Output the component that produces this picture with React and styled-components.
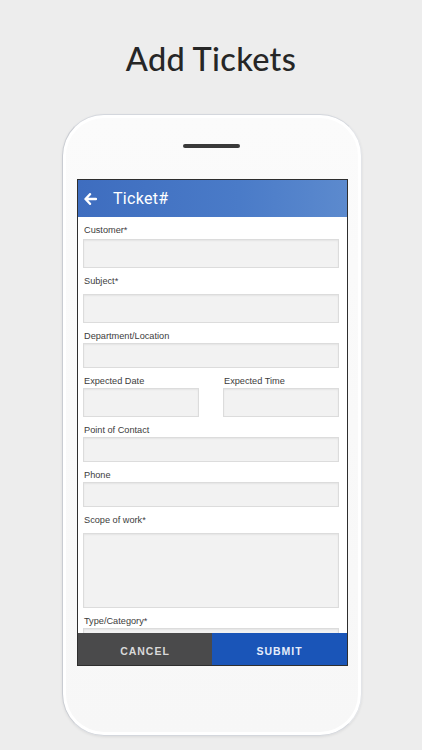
import React from 'react'
import styled, { createGlobalStyle } from 'styled-components'

const Global = createGlobalStyle`
  body {
    margin: 0;
    background: #ededed;
    font-family: "Liberation Sans", Arial, sans-serif;
  }
`

const Page = styled.div`
  width: 422px;
  height: 750px;
  display: flex;
  flex-direction: column;
  align-items: center;
  overflow: hidden;
  background: #ededed;
`

const Title = styled.h1`
  margin: 39px 0 0;
  height: 40px;
  line-height: 40px;
  font-family: Lato, "Open Sans", sans-serif;
  font-size: 32.5px;
  font-weight: 500;
  color: #262626;
  letter-spacing: 0.3px;
`

const Phone = styled.div`
  margin-top: 35px;
  margin-left: 2px;
  width: 300px;
  height: 622px;
  box-sizing: border-box;
  padding: 29px 13px 0 14px;
  display: flex;
  flex-direction: column;
  align-items: stretch;
  background: linear-gradient(180deg, #fbfbfb 0%, #f7f7f7 100%);
  border: 1.5px solid #d4d7dd;
  border-left-color: #c9ccd2;
  border-right-color: #e2e4e8;
  border-radius: 42px;
  box-shadow: 0 1px 3px rgba(0, 0, 0, 0.08), inset 0 0 0 3px #ffffff;
`

const Speaker = styled.div`
  align-self: center;
  width: 57px;
  height: 4px;
  border-radius: 3px;
  background: #3a3a3a;
  margin: 0 0 31px -2px;
`

const Screen = styled.div`
  height: 485px;
  display: flex;
  flex-direction: column;
  background: #ffffff;
  border: 1px solid #2e2e2e;
  overflow: hidden;
`

const Header = styled.div`
  height: 37px;
  flex: none;
  display: flex;
  align-items: center;
  gap: 16px;
  padding-left: 6px;
  background: linear-gradient(90deg, #3e6dbf 0%, #4a7bc8 60%, #5c8ace 100%);
  color: #ffffff;
`

const HeaderTitle = styled.span`
  font-family: Roboto, "Liberation Sans", sans-serif;
  font-size: 16px;
  font-weight: 400;
  letter-spacing: 0.3px;
`

const Form = styled.div`
  flex: 1;
  min-height: 0;
  overflow: hidden;
  padding: 0 8px 0 5px;
`

const Field = styled.div`
  display: flex;
  flex-direction: column;
  margin-top: ${({ $top }) => $top}px;
`

const Label = styled.label`
  height: 12px;
  line-height: 12px;
  font-size: 9.2px;
  color: #3c3c3c;
  padding-left: 1px;
  margin-bottom: ${({ $gap }) => $gap}px;
`

const Input = styled.div`
  height: ${({ $h }) => $h}px;
  box-sizing: border-box;
  background: #f2f2f2;
  border: 1px solid #dcdcdc;
  box-shadow: inset 0 1px 2px rgba(0, 0, 0, 0.06);
`

const Row = styled.div`
  display: grid;
  grid-template-columns: 1fr 1fr;
  gap: 24px;
`

const Footer = styled.div`
  height: 32px;
  flex: none;
  display: grid;
  grid-template-columns: 134px 1fr;
`

const FooterButton = styled.button`
  border: none;
  margin: 0;
  padding: 4px 0 0;
  font-family: "Liberation Sans", Arial, sans-serif;
  font-size: 10.5px;
  font-weight: 700;
  letter-spacing: 1px;
  background: ${({ $primary }) => ($primary ? '#1a55b8' : '#4a4a4b')};
  color: ${({ $primary }) => ($primary ? '#e6edfb' : '#d9d9d9')};
`

const BackArrow = () => (
  <svg width="13" height="12" viewBox="0 0 13 12">
    <path d="M6 1.2 1.5 6 6 10.8M1.8 6H12" fill="none" stroke="#fff" strokeWidth="2.4" strokeLinecap="round" strokeLinejoin="round" />
  </svg>
)

const fields = [
  { label: 'Customer*', top: 7, gap: 3, h: 29 },
  { label: 'Subject*', top: 7, gap: 7, h: 29 },
  { label: 'Department/Location', top: 7, gap: 1, h: 25 },
]

const rest = [
  { label: 'Point of Contact', top: 7, gap: 1, h: 25 },
  { label: 'Phone', top: 7, gap: 1, h: 25 },
  { label: 'Scope of work*', top: 7, gap: 7, h: 75 },
  { label: 'Type/Category*', top: 7, gap: 1, h: 29 },
]

const App = () => {
  return (
    <Page>
      <Global />
      <Title>Add Tickets</Title>
      <Phone>
        <Speaker />
        <Screen>
          <Header>
            <BackArrow />
            <HeaderTitle>Ticket#</HeaderTitle>
          </Header>
          <Form>
            {fields.map((f) => (
              <Field key={f.label} $top={f.top}>
                <Label $gap={f.gap}>{f.label}</Label>
                <Input $h={f.h} />
              </Field>
            ))}
            <Row>
              <Field $top={7}>
                <Label $gap={1}>Expected Date</Label>
                <Input $h={29} />
              </Field>
              <Field $top={7}>
                <Label $gap={1}>Expected Time</Label>
                <Input $h={29} />
              </Field>
            </Row>
            {rest.map((f) => (
              <Field key={f.label} $top={f.top}>
                <Label $gap={f.gap}>{f.label}</Label>
                <Input $h={f.h} />
              </Field>
            ))}
          </Form>
          <Footer>
            <FooterButton>CANCEL</FooterButton>
            <FooterButton $primary>SUBMIT</FooterButton>
          </Footer>
        </Screen>
      </Phone>
    </Page>
  )
}

export default App
